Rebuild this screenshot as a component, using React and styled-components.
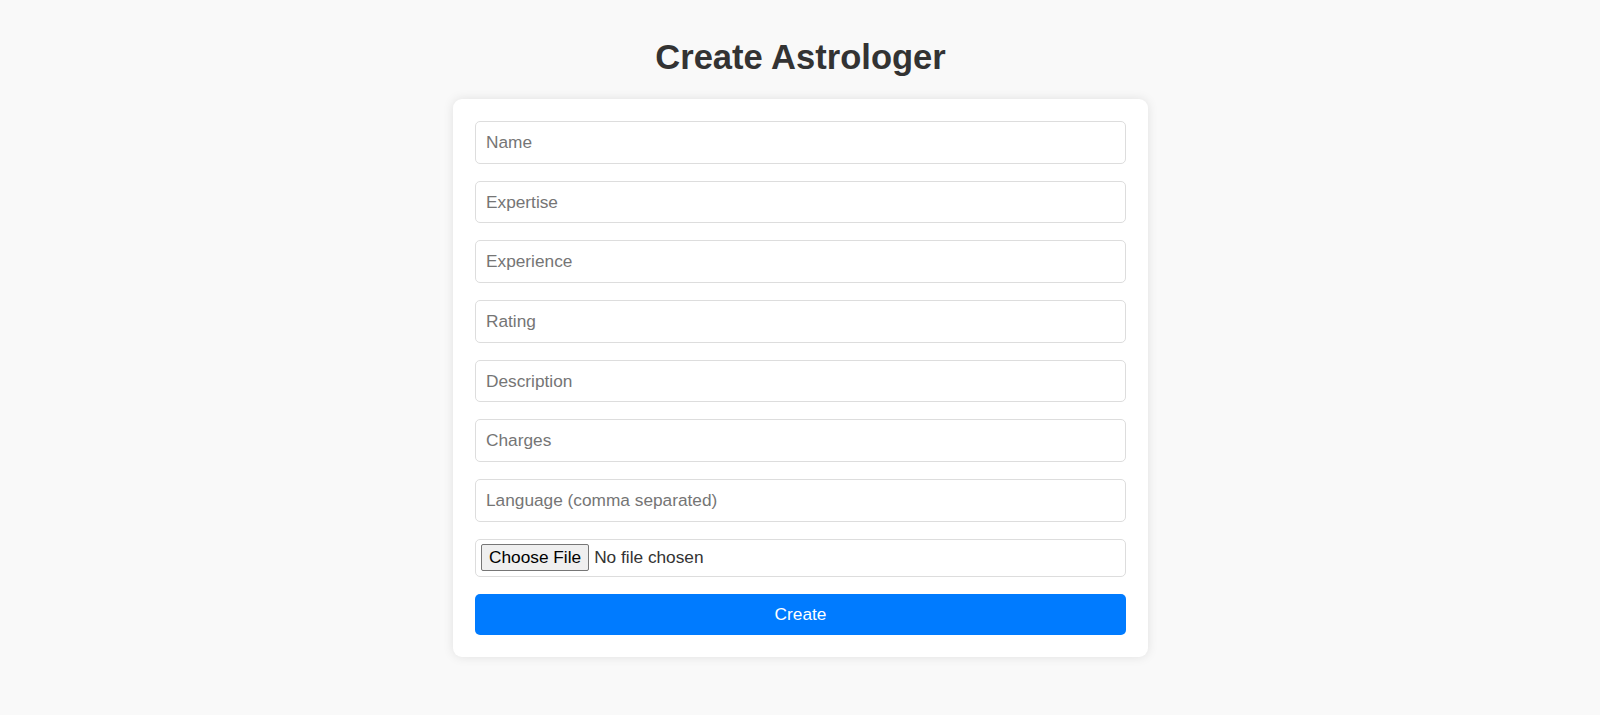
import React from "react";
import styled, { createGlobalStyle } from "styled-components";

const GlobalStyle = createGlobalStyle`
  html, body {
    margin: 0;
    padding: 0;
    background: #f9f9f9;
    font-family: "Liberation Sans", Arial, sans-serif;
  }
`;

const Page = styled.div`
  display: flex;
  flex-direction: column;
  align-items: center;
  padding-top: 38px;
  min-height: 715px;
  box-sizing: border-box;
`;

const Title = styled.h1`
  margin: 0 0 22px 1px;
  font-size: 34.56px;
  font-weight: bold;
  color: #333;
  text-align: center;
`;

const Card = styled.form`
  width: 695px;
  margin-left: 1px;
  box-sizing: border-box;
  padding: 22px;
  background: #fff;
  border-radius: 9px;
  box-shadow: 0 0 11px rgba(0, 0, 0, 0.1);
  display: flex;
  flex-direction: column;
  gap: 17px;
`;

const Field = styled.input`
  width: 100%;
  box-sizing: border-box;
  height: 42.7px;
  padding: 0 10px;
  font-family: "Liberation Sans", Arial, sans-serif;
  font-size: 17.28px;
  color: #333;
  border: 1px solid #ddd;
  border-radius: 5px;
  background: #fff;
  outline: none;
  &::placeholder {
    color: #757575;
  }
`;

const FileField = styled.input`
  width: 100%;
  box-sizing: border-box;
  padding: 4.5px 5px;
  font-family: "Liberation Sans", Arial, sans-serif;
  font-size: 17.28px;
  color: #333;
  border: 1px solid #ddd;
  border-radius: 5px;
  background: #fff;
  &::file-selector-button {
    font-family: "Liberation Sans", Arial, sans-serif;
    font-size: 17.28px;
    color: #000;
    background: #efefef;
    border: 1px solid #767676;
    border-radius: 2px;
    padding: 2px 7px;
    margin-right: 5px;
  }
`;

const SubmitButton = styled.button`
  width: 100%;
  height: 41px;
  border: none;
  border-radius: 5px;
  background: #007bff;
  color: #fff;
  font-family: "Liberation Sans", Arial, sans-serif;
  font-size: 17.28px;
  cursor: pointer;
`;

const fields = [
  "Name",
  "Expertise",
  "Experience",
  "Rating",
  "Description",
  "Charges",
  "Language (comma separated)",
];

export default function App() {
  return (
    <>
      <GlobalStyle />
      <Page>
        <Title>Create Astrologer</Title>
        <Card onSubmit={(e) => e.preventDefault()}>
          {fields.map((f) => (
            <Field key={f} type="text" placeholder={f} />
          ))}
          <FileField type="file" />
          <SubmitButton type="submit">Create</SubmitButton>
        </Card>
      </Page>
    </>
  );
}
